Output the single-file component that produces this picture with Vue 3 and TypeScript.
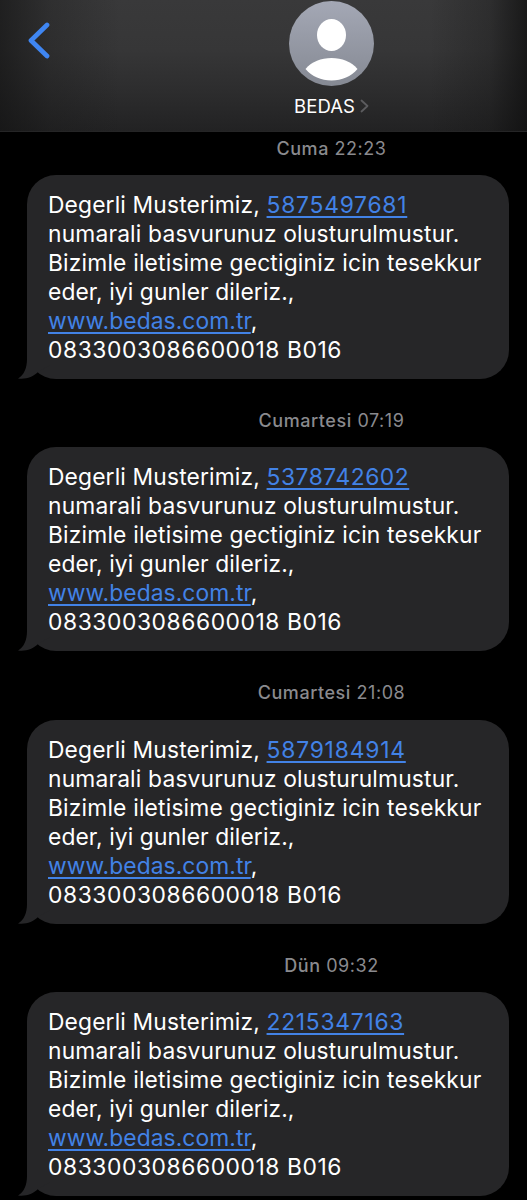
<script setup lang="ts">
interface Message {
  day: string
  time: string
  phone: string
  tracking: number
}

const messages: Message[] = [
  { day: 'Cuma', time: '22:23', phone: '5875497681', tracking: 0.77 },
  { day: 'Cumartesi', time: '07:19', phone: '5378742602', tracking: 0.54 },
  { day: 'Cumartesi', time: '21:08', phone: '5879184914', tracking: 0.82 },
  { day: 'Dün', time: '09:32', phone: '2215347163', tracking: 0.74 },
]
</script>

<template>
  <main class="screen">
    <header class="header">
      <svg class="back" viewBox="0 0 24 38" aria-label="Geri">
        <path d="M20 4 L4 19.500 L20 35" />
      </svg>
      <div class="contact">
        <svg class="avatar" viewBox="0 0 85 85">
          <defs>
            <linearGradient id="avatarFill" x1="0" y1="0" x2="0" y2="1">
              <stop offset="0" stop-color="#a4a8b5" />
              <stop offset="1" stop-color="#858993" />
            </linearGradient>
          </defs>
          <circle cx="42.5" cy="42.5" r="42.5" fill="url(#avatarFill)" />
          <ellipse cx="42.5" cy="34" rx="14.5" ry="16" fill="#fff" />
          <path d="M16.500 68 C23 60.500 32 57 42.500 57 C53 57 62 60.500 68.500 68 C62 75.500 53 79.500 42.500 79.500 C32 79.500 23 75.500 16.500 68 Z" fill="#fff" />
        </svg>
        <div class="name-row">
          <span class="name">BEDAS</span>
          <svg class="more" viewBox="0 0 9 14"><path d="M1.500 1.500 L7.500 7 L1.500 12.500" /></svg>
        </div>
      </div>
    </header>

    <section v-for="message in messages" :key="message.phone" class="entry">
      <div class="stamp"><b>{{ message.day }}</b> {{ message.time }}</div>
      <div class="bubble">
        <svg class="tail" viewBox="0 0 32 34">
          <path d="M9 0 V14 C9 23 6 30 0 33.500 C8 34.500 15 32 20 27 L32 20 V0 Z" />
        </svg>
        <p class="line greeting">Degerli Musterimiz, <a :style="{ letterSpacing: message.tracking + 'px' }">{{ message.phone }}</a></p>
        <p class="line number">numarali basvurunuz olusturulmustur.</p>
        <p class="line contacted">Bizimle iletisime gectiginiz icin tesekkur</p>
        <p class="line wishes">eder, iyi gunler dileriz.,</p>
        <p class="line site"><a>www.bedas.com.tr</a>,</p>
        <p class="line code">0833003086600018 B016</p>
      </div>
    </section>
  </main>
</template>

<style>
body {
  background: #000;
}
</style>

<style scoped>
.screen {
  width: 527px;
  height: 1200px;
  overflow: hidden;
  background: #000;
  color: #fff;
  font-family: Inter, "Liberation Sans", sans-serif;
}

.header {
  position: relative;
  box-sizing: border-box;
  height: 132px;
  border-bottom: 1px solid #252526;
  background:
    linear-gradient(90deg, rgba(18, 18, 18, 0.65) 0, rgba(24, 24, 24, 0.3) 50px, transparent 120px, transparent 430px, rgba(20, 20, 20, 0.3) 490px, rgba(14, 14, 14, 0.75) 527px),
    linear-gradient(180deg, #39393a 0, #363637 50px, #2d2d2e 90px, #222223 131px);
}

.back {
  position: absolute;
  left: 27px;
  top: 21px;
  width: 24px;
  height: 38px;
  fill: none;
  stroke: #3f86f2;
  stroke-width: 4.7;
  stroke-linecap: round;
  stroke-linejoin: round;
}

.contact {
  display: flex;
  flex-direction: column;
  align-items: center;
  margin-left: 136px;
  padding-top: 1px;
}

.avatar {
  width: 85px;
  height: 85px;
}

.name-row {
  display: flex;
  align-items: center;
  gap: 5px;
  margin-top: 8px;
  height: 24px;
}

.name {
  font-size: 18.5px;
  line-height: 24px;
  letter-spacing: 0.1px;
}

.more {
  width: 9px;
  height: 14px;
  fill: none;
  stroke: #5c5c5f;
  stroke-width: 1.8;
  stroke-linecap: round;
  stroke-linejoin: round;
}

.entry {
  height: 272.2px;
}

.stamp {
  height: 43.3px;
  box-sizing: border-box;
  padding: 6px 0 0 136px;
  text-align: center;
  font-size: 18px;
  line-height: 22px;
  letter-spacing: 0.55px;
  color: #8a8a8e;
}

.stamp b {
  font-weight: 500;
}

.bubble {
  position: relative;
  box-sizing: border-box;
  width: 482px;
  height: 204px;
  margin-left: 27px;
  padding: 15px 21px;
  border-radius: 29px;
  background: #262628;
}

.tail {
  position: absolute;
  left: -9px;
  bottom: 0;
  width: 32px;
  height: 34px;
  fill: #262628;
}

.line {
  position: relative;
  margin: 0;
  height: 29px;
  font-size: 22.8px;
  line-height: 29px;
  white-space: nowrap;
}

.greeting {
  letter-spacing: 0.15px;
}

.number {
  letter-spacing: 0.17px;
}

.contacted {
  letter-spacing: 0.18px;
}

.wishes {
  letter-spacing: 0.09px;
}

.site {
  letter-spacing: 0.09px;
}

.code {
  letter-spacing: 0.58px;
}

.line a {
  color: #4282e6;
  text-decoration: underline;
  text-decoration-thickness: 2px;
  text-underline-offset: 3px;
  text-decoration-skip-ink: none;
}
</style>
